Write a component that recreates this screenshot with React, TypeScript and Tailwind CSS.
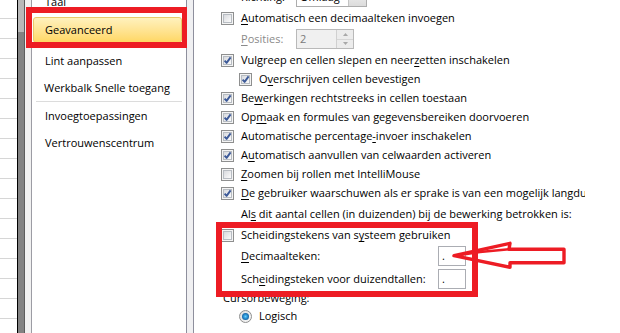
import type { ReactNode } from 'react'

const font = { fontFamily: '"Open Sans", "Noto Sans", sans-serif' }

// onderstreepte sneltoets
const U = ({ children }: { children: ReactNode }) => (
  <span className="underline decoration-1 underline-offset-[1.5px]">{children}</span>
)

const Checkbox = ({ checked }: { checked?: boolean }) => (
  <div className="w-[13px] h-[13px] shrink-0 border border-[#8e8f8f] bg-[#f4f4f4] p-px">
    <div className="relative w-full h-full border border-[#b7bcc2] bg-linear-to-br from-[#d8dade] to-[#fbfbfb]">
      {checked && (
        <svg viewBox="0 0 9 9" className="absolute left-[-1px] top-[-1px] w-[9px] h-[9px]">
          <path
            d="M1.6 4.6 L3.6 6.9 L7.6 1.4"
            fill="none"
            stroke="#3d5a98"
            strokeWidth="1.9"
            strokeLinejoin="round"
          />
        </svg>
      )}
    </div>
  </div>
)

const Radio = () => (
  <div className="w-[13px] h-[13px] shrink-0 rounded-full border border-[#8e8f8f] bg-linear-to-br from-[#dcdcdc] to-[#fafafa] flex items-center justify-center">
    <div className="w-[7px] h-[7px] rounded-full bg-radial from-[#5fd0ff] via-[#1f7fc4] to-[#0c3f6e]" />
  </div>
)

const CheckRow = ({ checked, children }: { checked?: boolean; children: ReactNode }) => (
  <div className="h-[19px] flex items-center gap-[7px]">
    <Checkbox checked={checked} />
    <span className="whitespace-nowrap">{children}</span>
  </div>
)

const NavItem = ({ children }: { children: ReactNode }) => (
  <div className="h-[27px] flex items-center pl-[13px] whitespace-nowrap">{children}</div>
)

export default function App() {
  return (
    <div
      className="relative w-[620px] h-[333px] overflow-hidden flex bg-white text-[11px] text-black"
      style={font}
    >
      {/* werkblad achter het venster */}
      <div className="w-[17px] shrink-0 flex flex-col mt-[-1px]">
        {Array.from({ length: 18 }).map((_, i) => (
          <div key={i} className="h-[20px] shrink-0 border-b border-[#d6d6d6]" />
        ))}
      </div>
      <div className="w-px shrink-0 bg-black" />
      <div className="w-[6px] shrink-0 flex flex-col">
        <div className="h-[32px] bg-[#b9b9b9]" />
        <div className="flex-1 bg-[#828282]" />
      </div>
      <div className="w-px shrink-0 bg-[#5c5c5c]" />
      <div className="w-[6px] shrink-0 bg-[#f0f0f0]" />
      <div className="w-px shrink-0 bg-[#9c9ca4]" />

      {/* navigatie */}
      <nav className="w-[154px] shrink-0 flex flex-col">
        <div className="mt-[-11px]">
          <NavItem>Taal</NavItem>
        </div>
        <div className="mt-[1px] ml-[1px] w-[149px] h-[26px] flex items-center pl-[11px] rounded-[3px] border border-[#e9c96a] bg-linear-to-b from-[#fff1bd] to-[#ffd763]">
          Geavanceerd
        </div>
        <div className="mt-[4px] h-[28px] flex items-center pl-[13px]">Lint aanpassen</div>
        <div className="h-[26px] flex items-center pl-[12px] whitespace-nowrap">Werkbalk Snelle toegang</div>
        <div className="ml-[4px] w-[146px] h-px bg-[#dcdcdc]" />
        <div className="mt-[1px]">
          <NavItem>Invoegtoepassingen</NavItem>
        </div>
        <NavItem>Vertrouwenscentrum</NavItem>
      </nav>

      <div className="w-px shrink-0 bg-[#8e8f9d]" />
      <div className="w-[6px] shrink-0 bg-[#f0f0f2]" />
      <div className="w-px shrink-0 bg-[#8e8f9d]" />

      {/* opties, rechts afgekapt zoals in het venster */}
      <main className="w-[391px] shrink-0 overflow-hidden flex flex-col pl-[27px]">
        <div className="mt-[-14px] h-[22px] flex items-center pl-[20px]">
          <span className="w-[55px] shrink-0">Richting:</span>
          <div className="w-[71px] h-[20px] shrink-0 flex border border-[#adadad]">
            <span className="flex-1 pl-[3px] leading-[18px]">Omlaag</span>
            <div className="w-[18px] border-l border-[#c4c4c4] bg-linear-to-b from-[#f4f4f4] to-[#dcdcdc]" />
          </div>
        </div>

        <div className="mt-[1px]">
          <CheckRow>
            <U>A</U>utomatisch een decimaalteken invoegen
          </CheckRow>
        </div>

        <div className="mt-[1px] h-[20px] flex items-center pl-[20px] text-[#8a8a8a]">
          <span className="w-[55px] shrink-0">
            <U>P</U>osities:
          </span>
          <div className="w-[58px] h-[20px] shrink-0 flex border border-[#b9b9b9] bg-[#f0f0f0]">
            <span className="flex-1 pl-[3px] leading-[18px] text-[#7a7a7a]">2</span>
            <div className="w-[17px] flex flex-col border-l border-[#d0d0d0]">
              <div className="flex-1 flex items-center justify-center border-b border-[#d6d6d6] bg-[#ececec]">
                <svg viewBox="0 0 5 3" className="w-[5px] h-[3px]">
                  <path d="M0 3 L2.5 0 L5 3 Z" fill="#a8a8a8" />
                </svg>
              </div>
              <div className="flex-1 flex items-center justify-center bg-[#ececec]">
                <svg viewBox="0 0 5 3" className="w-[5px] h-[3px]">
                  <path d="M0 0 L2.5 3 L5 0 Z" fill="#a8a8a8" />
                </svg>
              </div>
            </div>
          </div>
        </div>

        <div className="mt-[2px]">
          <CheckRow checked>
            Vulgreep en cellen slepen en neer<U>z</U>etten inschakelen
          </CheckRow>
        </div>
        <div className="pl-[18px]">
          <CheckRow checked>
            O<U>v</U>erschrijven cellen bevestigen
          </CheckRow>
        </div>
        <CheckRow checked>
          Be<U>w</U>erkingen rechtstreeks in cellen toestaan
        </CheckRow>
        <CheckRow checked>
          Op<U>m</U>aak en formules van gegevensbereiken doorvoeren
        </CheckRow>
        <CheckRow checked>
          Automatische percentage<U>-</U>invoer inschakelen
        </CheckRow>
        <CheckRow checked>
          A<U>u</U>tomatisch aanvullen van celwaarden activeren
        </CheckRow>
        <CheckRow>
          <U>Z</U>oomen bij rollen met IntelliMouse
        </CheckRow>
        <CheckRow checked>
          <U>D</U>e gebruiker waarschuwen als er sprake is van een mogelijk langdurige bewerking
        </CheckRow>

        <div className="mt-[2px] h-[19px] flex items-center pl-[20px] whitespace-nowrap">
          Al<U>s</U>&nbsp;dit aantal cellen (in duizenden) bij de bewerking betrokken is:
        </div>

        <div className="mt-[2px]">
          <CheckRow>
            Scheidingstekens van s<U>y</U>steem gebruiken
          </CheckRow>
        </div>

        <div className="mt-[1px] h-[20px] flex items-center pl-[20px]">
          <span className="w-[197px] shrink-0">
            <U>D</U>ecimaalteken:
          </span>
          <div className="w-[28px] h-[20px] shrink-0 border border-[#abadb3] pl-[3px] leading-[18px]">.</div>
        </div>
        <div className="mt-[3px] h-[20px] flex items-center pl-[20px]">
          <span className="w-[197px] shrink-0 whitespace-nowrap">
            Sch<U>e</U>idingsteken voor duizendtallen:
          </span>
          <div className="w-[28px] h-[20px] shrink-0 border border-[#abadb3] pl-[3px] leading-[18px]">.</div>
        </div>

        <div className="h-[18px] flex items-center pl-[2px]">Cursorbeweging:</div>
        <div className="h-[19px] flex items-center gap-[7px] pl-[18px]">
          <Radio />
          <span>Logisch</span>
        </div>
      </main>
      <div className="flex-1 bg-white" />

      {/* annotaties */}
      <div className="absolute left-[26px] top-[7px] w-[161px] h-[41px] border-[6px] border-r-[5px] border-[#ed1c24]" />
      <div className="absolute left-[216px] top-[222px] w-[262px] h-[75px] border-[6px] border-[#ed1c24]" />
      <svg className="absolute left-[450px] top-[240px] w-[120px] h-[32px]" viewBox="0 0 120 32">
        <path
          d="M4 15.7 L60 3.3 L59 9.3 L114 9.3 L114 22.7 L60 22.7 L60 27.3 Z"
          fill="none"
          stroke="#ed1c24"
          strokeWidth="3.4"
          strokeLinejoin="round"
        />
        <path d="M5 15.7 L30 12 L59 9.3" fill="none" stroke="#ed1c24" strokeWidth="2.5" />
      </svg>
    </div>
  )
}
